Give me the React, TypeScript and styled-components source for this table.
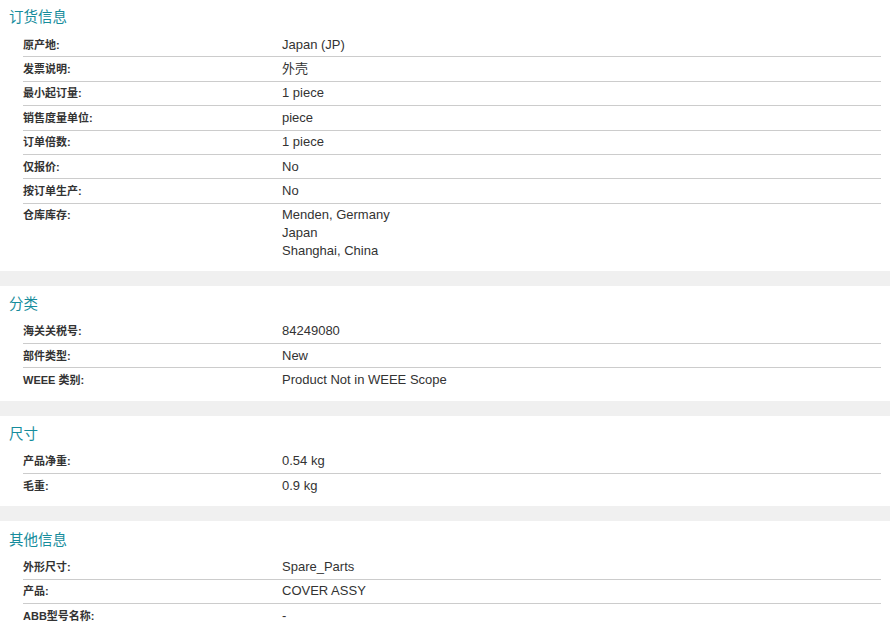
import * as React from 'react'
import styled, { createGlobalStyle } from 'styled-components'

const GlobalStyle = createGlobalStyle`
  html, body {
    margin: 0;
    padding: 0;
    background: #ffffff;
  }
  body {
    font-family: "Liberation Sans", Arial, "Noto Sans CJK SC", sans-serif;
    color: #333333;
  }
`

interface Row {
  label: string
  values: string[]
}

interface Group {
  title: string
  rows: Row[]
}

const groups: Group[] = [
  {
    title: '订货信息',
    rows: [
      { label: '原产地:', values: ['Japan (JP)'] },
      { label: '发票说明:', values: ['外壳'] },
      { label: '最小起订量:', values: ['1 piece'] },
      { label: '销售度量单位:', values: ['piece'] },
      { label: '订单倍数:', values: ['1 piece'] },
      { label: '仅报价:', values: ['No'] },
      { label: '按订单生产:', values: ['No'] },
      { label: '仓库库存:', values: ['Menden, Germany', 'Japan', 'Shanghai, China'] }
    ]
  },
  {
    title: '分类',
    rows: [
      { label: '海关关税号:', values: ['84249080'] },
      { label: '部件类型:', values: ['New'] },
      { label: 'WEEE 类别:', values: ['Product Not in WEEE Scope'] }
    ]
  },
  {
    title: '尺寸',
    rows: [
      { label: '产品净重:', values: ['0.54 kg'] },
      { label: '毛重:', values: ['0.9 kg'] }
    ]
  },
  {
    title: '其他信息',
    rows: [
      { label: '外形尺寸:', values: ['Spare_Parts'] },
      { label: '产品:', values: ['COVER ASSY'] },
      { label: 'ABB型号名称:', values: ['-'] }
    ]
  }
]

const Page = styled.div`
  width: 890px;
  background: #ffffff;
`

const Section = styled.section<{ $first?: boolean }>`
  padding: ${props => (props.$first ? '6.5px 9px 7.5px' : '8.5px 9px 9px')};
  border-top: ${props => (props.$first ? 0 : 15)}px solid #f0f0f0;
`

const SectionTitle = styled.h3<{ $first?: boolean }>`
  margin: 0 0 ${props => (props.$first ? 6.5 : 5.5)}px 0;
  font-size: 14.5px;
  line-height: 20px;
  font-weight: normal;
  color: #168c9c;
`

const Table = styled.div`
  margin-left: 14px;
  width: 858px;
`

const TableRow = styled.div`
  display: grid;
  grid-template-columns: 259px 1fr;
  padding: 2.7px 0;
  border-bottom: 1px solid #cccccc;

  &:last-child {
    border-bottom: 0;
  }
`

const Label = styled.div`
  font-size: 11px;
  line-height: 18px;
  font-weight: bold;
  color: #333333;
`

const Value = styled.div`
  font-size: 13px;
  line-height: 18px;
  color: #333333;
`

const App: React.FC = () => {
  return (
    <Page>
      <GlobalStyle />
      {groups.map((group, i) => (
        <Section key={group.title} $first={i === 0}>
          <SectionTitle $first={i === 0}>{group.title}</SectionTitle>
          <Table>
            {group.rows.map(row => (
              <TableRow key={row.label}>
                <Label>{row.label}</Label>
                <div>
                  {row.values.map(v => (
                    <Value key={v}>{v}</Value>
                  ))}
                </div>
              </TableRow>
            ))}
          </Table>
        </Section>
      ))}
    </Page>
  )
}

export default App
